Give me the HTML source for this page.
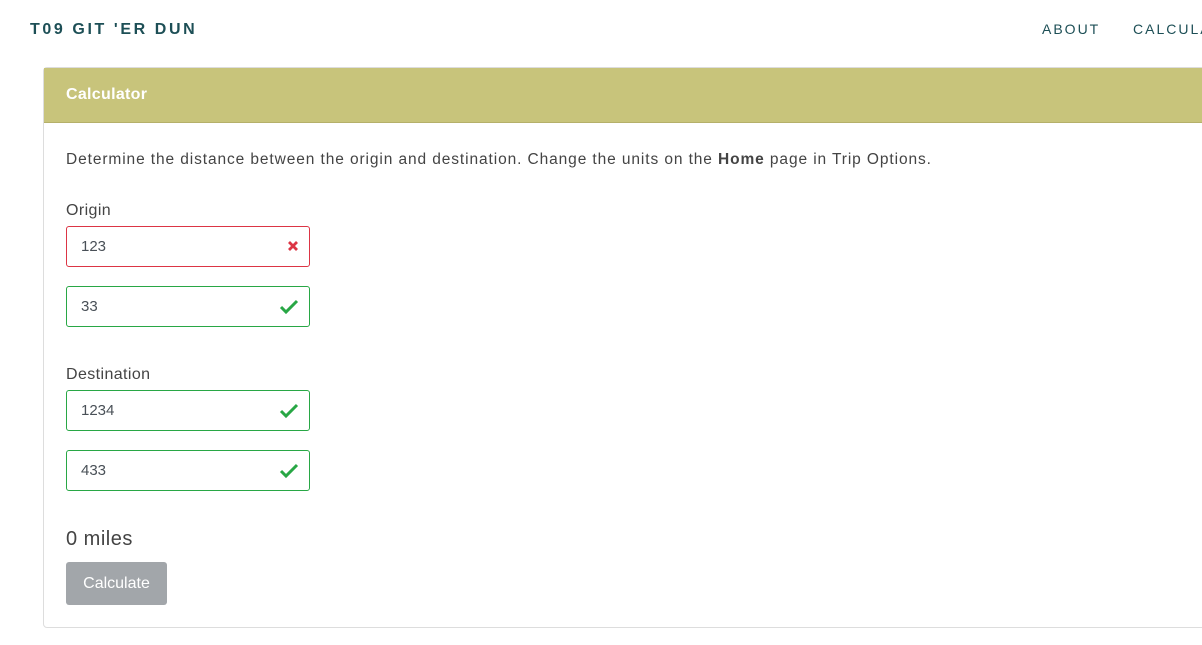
<!DOCTYPE html>
<html><head><meta charset="utf-8"><style>
*{box-sizing:border-box;margin:0;padding:0}
body{width:1202px;height:645px;overflow:hidden;background:#fff;font-family:"Liberation Sans",sans-serif;color:#444;position:relative}
.brand{position:absolute;left:30px;top:21px;font-weight:bold;font-size:16px;letter-spacing:2.6px;color:#1d4f56}
.nav{position:absolute;top:21px;font-size:14px;letter-spacing:2px;color:#1d4f56;white-space:nowrap}
.card{position:absolute;left:43px;top:67px;width:1180px;height:561px;border:1px solid #ddd;border-radius:4px}
.hdr{height:55px;background:#c8c47b;border-bottom:1px solid #b5b06a;color:#fff;font-weight:bold;font-size:16px;letter-spacing:0.3px;padding:18px 22px}
.p{position:absolute;left:22px;top:83px;font-size:15.5px;letter-spacing:0.9px;color:#444;white-space:nowrap}
.lbl{position:absolute;left:22px;font-size:16px;letter-spacing:0.4px;color:#444}
.in{position:absolute;left:22px;width:244px;height:41px;border:1px solid #28a745;border-radius:3px;font-size:15px;padding:11px 14px;color:#495057}
.in.bad{border-color:#dc3545}
.in svg{position:absolute;right:10px;top:12px}
.res{position:absolute;left:22px;top:460px;font-size:20px;letter-spacing:0.5px;color:#444}
.btn{position:absolute;left:22px;top:494px;width:101px;height:43px;background:#a2a6aa;border-radius:3px;color:#fff;font-size:16px;text-align:center;line-height:43px}
</style></head><body>
<div class="brand">T09 GIT 'ER DUN</div>
<div class="nav" style="left:1042px">ABOUT</div>
<div class="nav" style="left:1133px">CALCULATOR</div>
<div class="card">
<div class="hdr">Calculator</div>
<div class="p">Determine the distance between the origin and destination. Change the units on the <b>Home</b> page in Trip Options.</div>
<div class="lbl" style="top:134px">Origin</div>
<div class="in bad" style="top:158px">123<svg width="16" height="16" viewBox="0 0 16 16" style="top:11px;right:8px"><path d="M4 4L12 12M12 4L4 12" stroke="#dc3545" stroke-width="2.8"/></svg></div>
<div class="in" style="top:218px">33<svg width="20" height="16" viewBox="0 0 20 16"><path d="M2 8L7 13L18 2" stroke="#28a745" stroke-width="3" fill="none"/></svg></div>
<div class="lbl" style="top:298px">Destination</div>
<div class="in" style="top:322px">1234<svg width="20" height="16" viewBox="0 0 20 16"><path d="M2 8L7 13L18 2" stroke="#28a745" stroke-width="3" fill="none"/></svg></div>
<div class="in" style="top:382px">433<svg width="20" height="16" viewBox="0 0 20 16"><path d="M2 8L7 13L18 2" stroke="#28a745" stroke-width="3" fill="none"/></svg></div>
<div class="res">0 miles</div>
<div class="btn">Calculate</div>
</div>
</body></html>
